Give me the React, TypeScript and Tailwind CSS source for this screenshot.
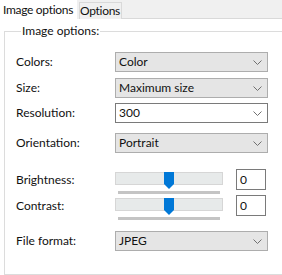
import { ReactNode } from "react";

const Chevron = () => (
	<svg width="9" height="5" viewBox="0 0 9 5" className="shrink-0">
		<polyline points="0.5,0.5 4.5,4.5 8.5,0.5" fill="none" stroke="#707070" strokeWidth="1" />
	</svg>
);

const Combo = ({ value, editable }: { value: string; editable?: boolean }) => (
	<div
		className={`flex h-[20px] w-[153px] items-center justify-between border pl-[3px] pr-[5px] ${
			editable ? "border-[#7a7a7a] bg-white" : "border-[#adadad] bg-[#e5e5e5]"
		}`}
	>
		<span>{value}</span>
		<Chevron />
	</div>
);

const Row = ({ label, children, className }: { label: string; children: ReactNode; className?: string }) => (
	<div className={`flex items-center ${className ?? ""}`}>
		<span className="w-[99px] shrink-0">{label}</span>
		{children}
	</div>
);

const Slider = ({ label, value, className }: { label: string; value: string; className?: string }) => (
	<div className={`flex items-start ${className ?? ""}`}>
		<span className="mt-[3px] w-[99px] shrink-0">{label}</span>
		<div className="flex w-[108px] flex-col">
			<div className="relative mt-[3px] h-[13px] border border-[#d6d6d6] bg-[#e7eaea]">
				{/* thumb */}
				<svg width="10" height="17" viewBox="0 0 10 17" className="absolute left-[48px] top-[-1px]">
					<polygon points="0,0 10,0 10,12 5,17 0,12" fill="#0078d7" />
				</svg>
			</div>
			<div className="mx-[3px] mt-[6px] h-[3px] bg-[#c4c4c4]" />
		</div>
		<div className="ml-[13px] flex h-[21px] w-[30px] items-center border border-[#7a7a7a] bg-white pl-[3px]">
			{value}
		</div>
	</div>
);

export default function App() {
	return (
		<div
			className="h-[275px] w-[282px] overflow-hidden whitespace-nowrap bg-white text-[12px] leading-[16px] text-[#111]"
			style={{ fontFamily: 'Lato, "Noto Sans", Arial, sans-serif' }}
		>
			{/* Tabs */}
			<div className="flex h-[19px] bg-[#f0f0f0] tracking-[-0.3px]">
				<div className="flex h-[19px] w-[77px] items-center bg-white pl-[3px]">Image options</div>
				<div className="ml-[2px] mt-[2px] flex h-[17px] w-[43px] items-center justify-center border border-b-0 border-[#d9d9d9] pr-[1px]">
					Options
				</div>
				<div className="flex-1 border-b border-[#d9d9d9]" />
			</div>

			{/* Group */}
			<div className="pl-[4px] pt-[4px]">
				<fieldset className="h-[252px] w-[290px] border border-[#dcdcdc] pl-[11px]">
					<legend className="ml-[5px] px-[1px]">Image options:</legend>
					<Row label="Colors:" className="mt-[13px]">
						<Combo value="Color" />
					</Row>
					<Row label="Size:" className="mt-[6px]">
						<Combo value="Maximum size" />
					</Row>
					<Row label="Resolution:" className="mt-[5px]">
						<Combo value="300" editable />
					</Row>
					<Row label="Orientation:" className="mt-[10px]">
						<Combo value="Portrait" />
					</Row>
					<Slider label="Brightness:" value="0" className="mt-[16px]" />
					<Slider label="Contrast:" value="0" className="mt-[1px]" />
					<Row label="File format:" className="mt-[11px]">
						<Combo value="JPEG" />
					</Row>
				</fieldset>
			</div>
		</div>
	);
}
